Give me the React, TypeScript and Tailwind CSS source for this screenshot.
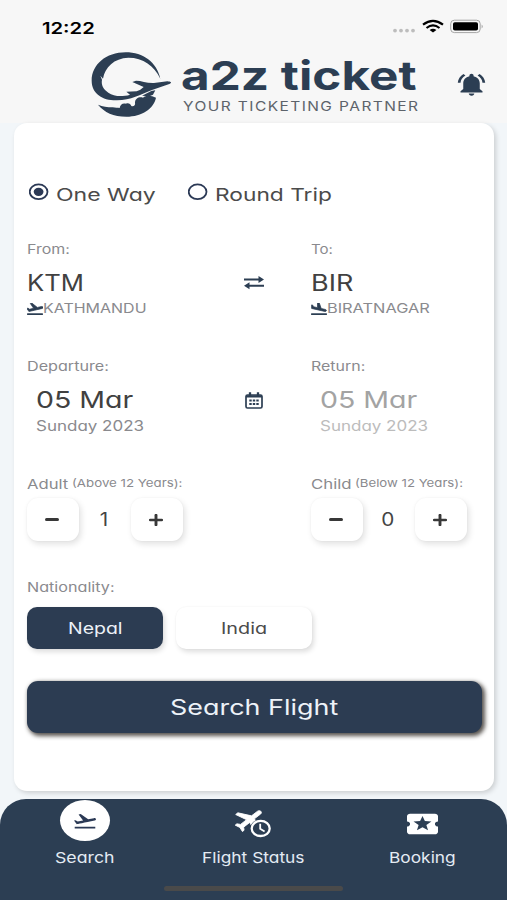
import React, { useLayoutEffect, useRef, useState } from "react";
import { MdFlightTakeoff, MdFlightLand, MdNotificationsActive, MdLocalActivity } from "react-icons/md";

interface FitTextProps {
  w: number;
  className?: string;
  children: React.ReactNode;
}

// Stretches a line of text horizontally to the given width
const FitText: React.FC<FitTextProps> = ({ w, className = "", children }) => {
  const ref = useRef<HTMLSpanElement>(null);
  const [scale, setScale] = useState(1);

  useLayoutEffect(() => {
    if (ref.current) setScale(w / ref.current.offsetWidth);
  }, [w]);

  return (
    <span className={`flex shrink-0 items-center whitespace-nowrap ${className}`} style={{ width: w }}>
      <span ref={ref} className="inline-block shrink-0 origin-left" style={{ transform: `scaleX(${scale})` }}>
        {children}
      </span>
    </span>
  );
};

const Logo = () => (
  <svg className="h-[67px] w-[83px] shrink-0" viewBox="30 18 249 201" fill="#2c3e53">
    <path d="M241 101C230 52 190 22 137 22C78 22 35 59 35 107C35 146 68 167 111 166C153 165 181 149 216 135L268 117C277 113 274 110 262 109L222 114C200 115 185 107 168 107L157 111L191 126L181 134L170 139L139 140L150 149C126 156 102 155 85 143C70 132 63 120 66 104L61 92L69 101C75 66 102 40 145 38C190 38 222 62 241 101Z" />
    <path d="M54 179C68 185 82 187 98 187C106 189 113 187 119 189C120 178 129 173 138 176C146 173 152 178 154 183C161 185 167 181 165 173C165 160 178 154 189 158C199 149 215 152 228 158C221 190 187 215 139 215C100 215 73 202 54 179Z" />
    <path d="M186 152L214 138L226 136L219 149L208 154Z" />
  </svg>
);

const SwapIcon = () => (
  <svg className="h-[14px] w-[20px]" viewBox="0 0 20 14" fill="#2c3e53">
    <path d="M0 2.5H14.5V0L20 3.5L14.5 7V4.5H0Z" />
    <path d="M20 8.7H5.5V6.2L0 9.7L5.5 13.2V10.7H20Z" />
  </svg>
);

const CalendarIcon = () => (
  <svg className="h-[17px] w-[18px]" viewBox="0 0 18 17" fill="none" stroke="#2c3e53">
    <rect x="1" y="3" width="16" height="13" rx="1.5" strokeWidth="1.7" />
    <path d="M1 4.3H17M5 .3V4M13 .3V4" strokeWidth="2.3" />
    <path d="M4.3 8.6H6.7M7.8 8.6H10.2M11.3 8.6H13.7M4.3 12H6.7M7.8 12H10.2M11.3 12H13.7" strokeWidth="2" />
  </svg>
);

const FlightClockIcon = () => (
  <svg className="h-[32px] w-[38px]" viewBox="0 0 38 32">
    <g transform="translate(14.8 12.8) scale(1.2 1) rotate(47) scale(1.25) translate(-11.5 -12)">
      <path
        fill="#fff"
        stroke="#fff"
        strokeWidth=".6"
        d="M21 16v-2l-8-5V3.5c0-.83-.67-1.5-1.5-1.5S10 2.67 10 3.5V9l-8 5v2l8-2.5V19l-2 1.5V22l3.5-1 3.5 1v-1.5L13 19v-5.5l8 2.5z"
      />
    </g>
    <ellipse cx="25.7" cy="21.4" rx="10.6" ry="9" fill="#2c3e53" />
    <ellipse cx="25.7" cy="21.4" rx="9" ry="7.6" fill="none" stroke="#fff" strokeWidth="2.3" />
    <path d="M25.2 16.8V21.8L29.6 24.4" fill="none" stroke="#fff" strokeWidth="1.8" />
  </svg>
);

const StatusIcons = () => (
  <svg className="h-[16px] w-[92px]" viewBox="0 0 92 16">
    <g fill="#bdbdbd">
      <circle cx="3" cy="11.6" r="1.9" />
      <circle cx="9" cy="11.6" r="1.9" />
      <circle cx="15" cy="11.6" r="1.9" />
      <circle cx="21" cy="11.6" r="1.9" />
    </g>
    <path d="M31 5.6Q41 -2 51 5.6M34.5 9Q41 3.8 47.5 9" fill="none" stroke="#000" strokeWidth="2.2" />
    <path d="M37.6 11.1Q41 8.6 44.4 11.1L41 13.6Z" fill="#000" />
    <rect x="58.7" y="1.2" width="29.5" height="12.4" rx="3.6" fill="none" stroke="#a5a5a5" />
    <rect x="61" y="3.3" width="25" height="8.3" rx="1.8" fill="#000" />
    <path d="M89.6 5.5Q92 7.4 89.6 9.4Z" fill="#a5a5a5" />
  </svg>
);

const Radio: React.FC<{ checked: boolean; onClick: () => void }> = ({ checked, onClick }) => (
  <button type="button" onClick={onClick} className="-mt-[6px] h-[18px] w-[20px] shrink-0">
    <svg className="h-[18px] w-[20px]" viewBox="0 0 20 18">
      <ellipse cx="9.6" cy="8.8" rx="8.9" ry="7.4" fill="none" stroke="#2b3955" strokeWidth="1.8" />
      {checked && <ellipse cx="9.6" cy="8.8" rx="4.9" ry="4.1" fill="#2b3955" />}
    </svg>
  </button>
);

const stepButton =
  "flex h-[43px] w-[52px] items-center justify-center rounded-[11px] bg-white pr-[2px] shadow-[2px_3px_6px_rgba(0,0,0,0.12),0_0_2px_rgba(0,0,0,0.05)]";

const Counter: React.FC<{ initial: number }> = ({ initial }) => {
  const [count, setCount] = useState(initial);
  return (
    <div className="mt-[5px] flex items-center">
      <button type="button" className={stepButton} onClick={() => setCount(c => Math.max(0, c - 1))}>
        <span className="h-[3px] w-[14px] rounded-sm bg-[#383838]" />
      </button>
      <span className="flex w-[52px] scale-x-115 items-center justify-center pr-[2px] text-[18px] leading-none text-[#444]">{count}</span>
      <button type="button" className={stepButton} onClick={() => setCount(c => c + 1)}>
        <svg className="h-[12px] w-[14px]" viewBox="0 0 14 12" stroke="#383838" strokeLinecap="round">
          <path d="M1.2 6H12.8" strokeWidth="2.5" />
          <path d="M7 1.2V10.8" strokeWidth="2.9" />
        </svg>
      </button>
    </div>
  );
};

const App: React.FC = () => {
  const [oneWay, setOneWay] = useState(true);
  const [nationality, setNationality] = useState("Nepal");
  const active = "bg-[#2c3c52] text-[#edf2f8]";
  const inactive = "bg-white text-[#4b4b4b]";

  return (
    <div className="flex h-[900px] w-[507px] flex-col overflow-hidden bg-[#f2f6f9] font-['Inter','Liberation_Sans',sans-serif] [font-feature-settings:'cv11']">
      <header className="h-[123px] shrink-0 bg-[#f7f7f7]">
        <div className="flex h-[51px] items-center justify-between pt-[3px] pr-[15px] pl-[42px]">
          <FitText w={53} className="pt-px text-[16px] font-semibold text-black">12:22</FitText>
          <div className="mr-[8px]"><StatusIcons /></div>
        </div>
        <div className="flex h-[68px] pl-[90px]">
          <Logo />
          <div className="ml-[8px] flex flex-col pt-px text-[#2c3e53]">
            <FitText w={236} className="h-[47px] text-[40px] leading-none font-bold [font-feature-settings:normal]">a2z ticket</FitText>
            <FitText w={236} className="ml-[2px] h-[15px] text-[13px] leading-none tracking-[1.2px] text-[#5d636b]">YOUR TICKETING PARTNER</FitText>
          </div>
          <svg className="mt-[20px] ml-[36px] h-[27px] w-[33px]" viewBox="0 0 24 24" preserveAspectRatio="none">
            <MdNotificationsActive size={24} color="#2c3e53" />
          </svg>
        </div>
      </header>

      <main className="mr-[13px] ml-[14px] flex h-[668px] shrink-0 flex-col rounded-[13px] bg-white pt-[60px] pr-[12px] pl-[13px] text-[13px] text-[#8a8a8e] shadow-[2px_2px_5px_rgba(0,0,0,0.16)]">
        <div className="flex h-[24px] items-center pl-[2px] text-[17.5px] text-[#4b4b4b]">
          <Radio checked={oneWay} onClick={() => setOneWay(true)} />
          <FitText w={100} className="ml-[7px]">One Way</FitText>
          <span className="w-[32px]" />
          <Radio checked={!oneWay} onClick={() => setOneWay(false)} />
          <FitText w={117} className="ml-[7px]">Round Trip</FitText>
        </div>

        <div className="mt-[33px] grid grid-cols-[217px_66.5px_1fr]">
          <div>
            <FitText w={43} className="h-[18px] pt-[2px]">From:</FitText>
            <FitText w={57} className="mt-[11px] h-[26px] pt-px text-[22.5px] text-[#414141]">KTM</FitText>
            <div className="mt-[5px] flex h-[16px] items-center">
              <svg className="mt-px h-[12px] w-[16px]" viewBox="2 3.5 20 17.5" preserveAspectRatio="none">
                <MdFlightTakeoff size={24} color="#2c3e53" strokeWidth={1} />
              </svg>
              <FitText w={103} className="text-[13.5px]">KATHMANDU</FitText>
            </div>
          </div>
          <div className="pt-[36px]"><SwapIcon /></div>
          <div>
            <FitText w={22} className="h-[18px] pt-[2px]">To:</FitText>
            <FitText w={42} className="mt-[11px] h-[26px] pt-px text-[22.5px] text-[#414141]">BIR</FitText>
            <div className="mt-[5px] flex h-[16px] items-center">
              <svg className="mt-px h-[12px] w-[16px]" viewBox="2 3.5 20 17.5" preserveAspectRatio="none">
                <MdFlightLand size={24} color="#2c3e53" strokeWidth={1} />
              </svg>
              <FitText w={103} className="text-[13.5px]">BIRATNAGAR</FitText>
            </div>
          </div>
        </div>

        <div className="mt-[41px] grid grid-cols-[217px_66.5px_1fr]">
          <div>
            <FitText w={82} className="h-[18px] pt-[2px]">Departure:</FitText>
            <FitText w={97} className="mt-[11px] ml-[9px] h-[26px] pt-px text-[23.5px] text-[#414141]">05 Mar</FitText>
            <FitText w={108} className="mt-[5px] ml-[9px] h-[16px] text-[14px]">Sunday 2023</FitText>
          </div>
          <div className="pt-[35px] pl-px"><CalendarIcon /></div>
          <div>
            <FitText w={54} className="h-[18px] pt-[2px]">Return:</FitText>
            <FitText w={97} className="mt-[11px] ml-[9px] h-[26px] pt-px text-[23.5px] text-[#a3a3a3]">05 Mar</FitText>
            <FitText w={108} className="mt-[5px] ml-[9px] h-[16px] text-[14px] text-[#bcbcbc]">Sunday 2023</FitText>
          </div>
        </div>

        <div className="mt-[42px] grid grid-cols-[283.5px_1fr]">
          <div>
            <div className="flex h-[18px] items-center">
              <FitText w={41} className="pt-px">Adult</FitText>
              <FitText w={110} className="mb-[2px] ml-[4px] text-[11px]">(Above 12 Years):</FitText>
            </div>
            <Counter initial={1} />
          </div>
          <div>
            <div className="flex h-[18px] items-center">
              <FitText w={40} className="pt-px">Child</FitText>
              <FitText w={108} className="mb-[2px] ml-[4px] text-[11px]">(Below 12 Years):</FitText>
            </div>
            <Counter initial={0} />
          </div>
        </div>

        <FitText w={87} className="mt-[37px] h-[18px] pt-[2px]">Nationality:</FitText>
        <div className="mt-[11px] flex gap-[13px] text-[15.5px]">
          <button
            type="button"
            onClick={() => setNationality("Nepal")}
            className={`flex h-[42px] w-[136px] items-center justify-center rounded-[10px] pt-[2px] shadow-[2px_3px_5px_rgba(0,0,0,0.13),0_0_2px_rgba(0,0,0,0.05)] ${nationality === "Nepal" ? active : inactive}`}
          >
            <FitText w={54}>Nepal</FitText>
          </button>
          <button
            type="button"
            onClick={() => setNationality("India")}
            className={`flex h-[42px] w-[136px] items-center justify-center rounded-[10px] pt-[2px] shadow-[2px_3px_5px_rgba(0,0,0,0.13),0_0_2px_rgba(0,0,0,0.05)] ${nationality === "India" ? active : inactive}`}
          >
            <FitText w={46}>India</FitText>
          </button>
        </div>

        <button
          type="button"
          className="mt-[32px] flex h-[52px] w-[455px] items-center justify-center rounded-[11px] bg-[#2c3c52] pt-[2px] pr-[2px] text-[21px] text-[#edf2f8] shadow-[2px_2px_4px_1px_rgba(45,40,35,0.8)]"
        >
          <FitText w={168}>Search Flight</FitText>
        </button>
      </main>

      <nav className="mt-[8px] flex h-[101px] flex-col items-center rounded-t-[26px] bg-[#2c3e53] text-[15px] text-[#e4ebf3]">
        <div className="grid h-[87px] w-full grid-cols-3">
          <div className="flex flex-col items-center">
            <div className="mt-px flex h-[41px] w-[50px] items-center justify-center rounded-[50%] bg-white">
              <svg className="h-[20px] w-[26px]" viewBox="0 0 24 24" preserveAspectRatio="none">
                <MdFlightTakeoff size={24} color="#2b3955" />
              </svg>
            </div>
            <FitText w={59} className="mt-[8px] h-[18px]">Search</FitText>
          </div>
          <div className="flex flex-col items-center">
            <div className="mt-[8px] h-[34px]"><FlightClockIcon /></div>
            <FitText w={103} className="mt-[8px] h-[18px]">Flight Status</FitText>
          </div>
          <div className="flex flex-col items-center">
            <svg className="mt-[14px] h-[22px] w-[31px]" viewBox="2 3.5 20 17" preserveAspectRatio="none">
              <MdLocalActivity size={24} color="#fff" />
            </svg>
            <FitText w={67} className="mt-[14px] h-[18px]">Booking</FitText>
          </div>
        </div>
        <div className="h-[5px] w-[179px] rounded-full bg-[#4a4a4a]" />
      </nav>
    </div>
  );
};

export default App;
